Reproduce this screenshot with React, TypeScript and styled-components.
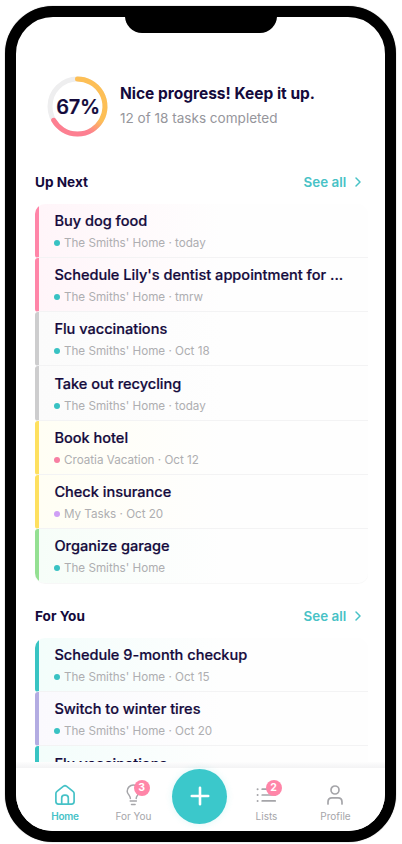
import React from "react";
import styled, { createGlobalStyle } from "styled-components";

const ink = "#140a3c";
const teal = "#3bc8cb";
const pink = "#ff85a8";

const GlobalStyle = createGlobalStyle`
  * { box-sizing: border-box; }
  body { margin: 0; background: #fff; font-family: Inter, "Liberation Sans", sans-serif; color: ${ink}; }
`;

const Stage = styled.div`
  width: 402px;
  height: 844px;
  padding: 5.6px 0 0 4.6px;
  overflow: hidden;
`;

const Phone = styled.div`
  position: relative;
  width: 391.6px;
  height: 836.8px;
  border: 11px solid #000;
  border-radius: 48px;
  box-shadow: 0 0 1px #555;
  background: #fff;
  overflow: hidden;
  display: flex;
  flex-direction: column;
`;

const Notch = styled.div`
  position: absolute;
  top: -1px;
  left: 109px;
  width: 152px;
  height: 17px;
  border-radius: 0 0 20px 20px;
  background: #000;
`;

const Content = styled.main`
  height: 745px;
  flex: none;
  overflow: hidden;
  padding: 57px 17px 0 19.4px;
`;

const Progress = styled.section`
  display: flex;
  align-items: center;
  height: 64px;
  padding-left: 10px;
`;

const Ring = styled.div`
  width: 64px;
  height: 64px;
  display: grid;
  place-items: center;
  flex: none;
  > * { grid-area: 1 / 1; }
`;

const Percent = styled.span`
  padding: 2px 0 0 2px;
  font-size: 20px;
  font-weight: 600;
  letter-spacing: -0.35px;
  -webkit-text-stroke: 0.2px ${ink};
`;

const ProgressText = styled.div`
  margin-left: 11px;
  padding-top: 1px;
  white-space: nowrap;
`;

const ProgressTitle = styled.h1`
  margin: 0;
  font-size: 15.5px;
  font-weight: 700;
  line-height: 24px;
`;

const ProgressNote = styled.p`
  margin: 0;
  font-size: 13.55px;
  line-height: 24px;
  color: #96969c;
`;

const SectionHead = styled.header<{ $top: number }>`
  display: flex;
  justify-content: space-between;
  align-items: center;
  height: 20px;
  margin: ${(p) => p.$top}px 0 12px;
  padding-right: 4px;
`;

const SectionTitle = styled.h2`
  margin: 0;
  font-size: 13.6px;
  font-weight: 700;
`;

const SeeAll = styled.a`
  display: flex;
  align-items: center;
  gap: 6px;
  color: #48c2c6;
  font-size: 13.4px;
  font-weight: 600;
`;

const Card = styled.ul`
  list-style: none;
  margin: 0;
  padding: 0;
  border-radius: 10px;
  overflow: hidden;
  box-shadow: 0 1px 1px rgba(0, 0, 0, 0.035);
`;

const Row = styled.li<{ $accent: string; $tint: string }>`
  height: 54.28px;
  padding: 6.2px 8px 0 15.4px;
  border-left: 4px solid ${(p) => p.$accent};
  border-bottom: 1px solid #f3f3f4;
  border-radius: 3px 0 0 3px;
  background: linear-gradient(90deg, ${(p) => p.$tint}, #fefefe 56%);
  &:last-child { border-bottom-color: transparent; }
`;

const TaskTitle = styled.div`
  font-size: 14.55px;
  font-weight: 500;
  line-height: 22px;
  white-space: nowrap;
  -webkit-text-stroke: 0.2px ${ink};
`;

const Meta = styled.div`
  display: flex;
  align-items: center;
  gap: 3.6px;
  font-size: 11.65px;
  line-height: 22px;
  color: #aeaeb1;
  white-space: nowrap;
`;

const Dot = styled.i<{ $color: string }>`
  width: 6px;
  height: 6px;
  border-radius: 50%;
  background: ${(p) => p.$color};
`;

const NavEdge = styled.div`
  height: 6px;
  flex: none;
  background: linear-gradient(#fdfdfd, #f3f3f4);
`;

const Nav = styled.nav`
  flex: 1;
  display: grid;
  grid-template-columns: 68px 69px 63px 71px 67px;
  padding-left: 15.4px;
  background: #fff;
`;

const NavItem = styled.a<{ $active?: boolean }>`
  position: relative;
  display: flex;
  flex-direction: column;
  align-items: center;
  padding-top: 15px;
  color: ${(p) => (p.$active ? "#46c2c7" : "#a5a5a9")};
  font-size: 10px;
  letter-spacing: ${(p) => (p.$active ? "-0.3px" : "0")};
  font-weight: ${(p) => (p.$active ? 600 : 400)};
  line-height: 14px;
  gap: 2.6px;
  white-space: nowrap;
`;

const Badge = styled.span`
  position: absolute;
  top: 12px;
  left: 34.7px;
  width: 16px;
  height: 16px;
  border-radius: 50%;
  background: ${pink};
  color: #fff;
  font-size: 10.5px;
  font-weight: 700;
  line-height: 16px;
  text-align: center;
`;

const AddButton = styled.button`
  width: 55px;
  height: 55px;
  margin: 1px 0 0 4.4px;
  padding: 0;
  border: 0;
  border-radius: 50%;
  background: ${teal};
  box-shadow: 0 0 7px rgba(59, 200, 203, 0.16);
  display: grid;
  place-items: center;
`;

type Task = { title: string; list: string; due?: string; accent: string; tint: string; dot?: string };

const upNext: Task[] = [
  { title: "Buy dog food", list: "The Smiths' Home", due: "today", accent: pink, tint: "#fff5f9" },
  { title: "Schedule Lily's dentist appointment for ...", list: "The Smiths' Home", due: "tmrw", accent: pink, tint: "#fff5f9" },
  { title: "Flu vaccinations", list: "The Smiths' Home", due: "Oct 18", accent: "#cdcdce", tint: "#fbfbfb" },
  { title: "Take out recycling", list: "The Smiths' Home", due: "today", accent: "#cdcdce", tint: "#fbfbfb" },
  { title: "Book hotel", list: "Croatia Vacation", due: "Oct 12", accent: "#fee05f", tint: "#fffef4", dot: "#f77fa2" },
  { title: "Check insurance", list: "My Tasks", due: "Oct 20", accent: "#fee05f", tint: "#fffef4", dot: "#cf9ff5" },
  { title: "Organize garage", list: "The Smiths' Home", accent: "#94e092", tint: "#f6fdf8" },
];

const forYou: Task[] = [
  { title: "Schedule 9-month checkup", list: "The Smiths' Home", due: "Oct 15", accent: "#38c4c3", tint: "#f3fdfb" },
  { title: "Switch to winter tires", list: "The Smiths' Home", due: "Oct 20", accent: "#b3ace2", tint: "#faf9fd" },
  { title: "Flu vaccinations", list: "The Smiths' Home", due: "Oct 18", accent: "#38c4c3", tint: "#f3fdfb" },
];

function TaskSection({ title, tasks, top }: { title: string; tasks: Task[]; top: number }) {
  return (
    <section>
      <SectionHead $top={top}>
        <SectionTitle>{title}</SectionTitle>
        <SeeAll>
          See all
          <svg width="12" height="12" viewBox="0 0 12 12" fill="none" stroke="currentColor" strokeWidth="1.5" strokeLinecap="round" strokeLinejoin="round">
            <path d="M4 2l4 4-4 4" />
          </svg>
        </SeeAll>
      </SectionHead>
      <Card>
        {tasks.map((t) => (
          <Row key={t.title} $accent={t.accent} $tint={t.tint}>
            <TaskTitle>{t.title}</TaskTitle>
            <Meta>
              <Dot $color={t.dot ?? "#38c2c3"} />
              {t.list}
              {t.due ? ` · ${t.due}` : ""}
            </Meta>
          </Row>
        ))}
      </Card>
    </section>
  );
}

const icon = {
  width: 24,
  height: 24,
  viewBox: "0 0 24 24",
  fill: "none",
  stroke: "currentColor",
  strokeWidth: 1.7,
  strokeLinecap: "round" as const,
  strokeLinejoin: "round" as const,
};

export default function App() {
  return (
    <>
      <GlobalStyle />
      <Stage>
        <Phone>
          <Notch />
          <Content>
            <Progress>
              <Ring>
                <svg width="64" height="64" viewBox="0 0 64 64" fill="none">
                  <defs>
                    <linearGradient id="arc" x1="48" y1="42" x2="40" y2="56" gradientUnits="userSpaceOnUse">
                      <stop offset="0" stopColor="#fdbf56" />
                      <stop offset="1" stopColor="#fd7f91" />
                    </linearGradient>
                  </defs>
                  <circle cx="32.5" cy="32.5" r="27.5" stroke="#eeeeef" strokeWidth="5" />
                  <path d="M32.5 5A27.5 27.5 0 1 1 8.68 46.25" stroke="url(#arc)" strokeWidth="5" strokeLinecap="round" />
                </svg>
                <Percent>67%</Percent>
              </Ring>
              <ProgressText>
                <ProgressTitle>Nice progress! Keep it up.</ProgressTitle>
                <ProgressNote>12 of 18 tasks completed</ProgressNote>
              </ProgressText>
            </Progress>
            <TaskSection title="Up Next" tasks={upNext} top={34} />
            <TaskSection title="For You" tasks={forYou} top={22.4} />
          </Content>
          <NavEdge />
          <Nav>
            <NavItem $active>
              <svg {...icon}>
                <path d="M2.900 10.600c0-1 .3-1.600 1.100-2.200L10.600 3.200c.8-.6 2-.6 2.800 0L20 8.400c.8.6 1.100 1.200 1.100 2.200v7.900c0 1.700-.9 2.600-2.600 2.600h-13c-1.700 0-2.600-.9-2.600-2.600z" />
                <path d="M8.700 21v-6c0-1.900.9-2.800 2.800-2.800h1c1.900 0 2.800.9 2.800 2.800v6" />
              </svg>
              Home
            </NavItem>
            <NavItem>
              <svg {...icon} strokeWidth={1.5}>
                <path d="M9.400 15.500c0-1.500-.5-2.300-1.400-3.400C6.900 10.900 6.200 9.800 6.200 8.200a6.100 6.100 0 0 1 12.200 0c0 1.600-.7 2.700-1.800 3.900-.9 1.100-1.400 1.900-1.400 3.400M9.200 18h6.200M10.500 21.500h3.600" />
              </svg>
              For You
              <Badge>3</Badge>
            </NavItem>
            <AddButton aria-label="Add task">
              <svg width="24" height="24" viewBox="0 0 24 24" stroke="#fff" strokeWidth="2.600" strokeLinecap="round">
                <path d="M12 3.800v16.400M3.800 12h16.400" />
              </svg>
            </AddButton>
            <NavItem>
              <svg {...icon}>
                <path d="M8.200 6.200h13M8.200 12h13M8.200 17.900h13" />
                <path d="M3.600 6.200h.01M3.600 12h.01M3.600 17.900h.01" strokeWidth="2" />
              </svg>
              Lists
              <Badge>2</Badge>
            </NavItem>
            <NavItem>
              <svg {...icon}>
                <circle cx="12" cy="7" r="4" />
                <path d="M5 21v-2c0-2.800 1.300-4.200 4-4.200h6c2.700 0 4 1.400 4 4.200v2" />
              </svg>
              Profile
            </NavItem>
          </Nav>
        </Phone>
      </Stage>
    </>
  );
}
